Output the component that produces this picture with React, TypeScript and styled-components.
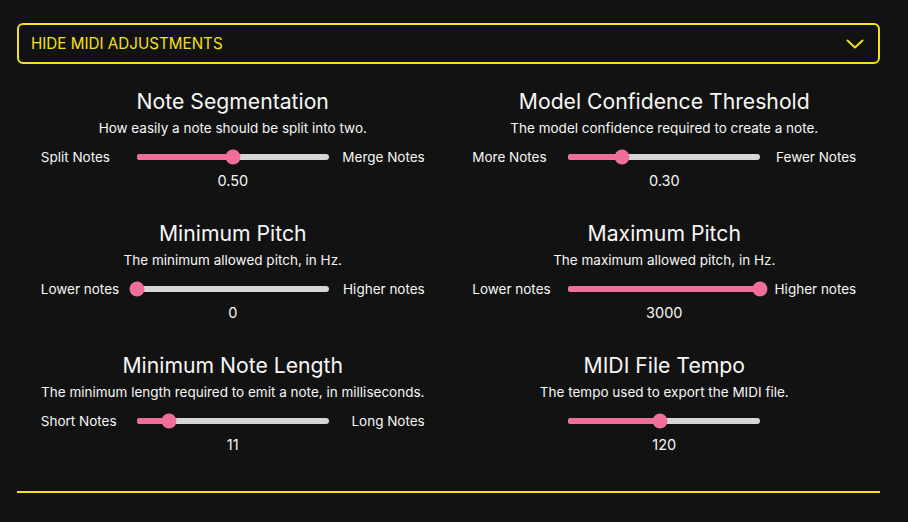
import styled, { createGlobalStyle } from 'styled-components';

/******************************************************************************/

const GlobalStyle = createGlobalStyle`
  body {
    margin: 0;
    background-color: #121212;
    font-family: Inter, 'Noto Sans', sans-serif;
    color: #f7f7f7;
  }
`;

const Page = styled.div`
  width: 863px;
  padding: 23px 0 0 17px;
  min-height: 522px;
  box-sizing: content-box;
`;

const Toggle = styled.div`
  height: 41px;
  box-sizing: border-box;
  border: 2px solid #f4e11a;
  border-radius: 6px;
  display: flex;
  align-items: center;
  justify-content: space-between;
  padding: 0 14px 0 12px;
  color: #f4e11a;
  font-size: 15.2px;
`;

const Grid = styled.div`
  display: grid;
  grid-template-columns: 1fr 1fr;
  row-gap: 31px;
  margin-top: 25px;
`;

const Section = styled.div`
  display: flex;
  flex-direction: column;
  align-items: center;
`;

const Title = styled.div`
  font-size: 21.2px;
  line-height: 24px;
`;

const Subtitle = styled.div`
  font-size: 13.5px;
  line-height: 18px;
  margin-top: 6px;
`;

const SliderRow = styled.div`
  display: grid;
  grid-template-columns: 96px 192px 96px;
  align-items: center;
  height: 20px;
  margin-top: 10px;
  font-size: 13.5px;
`;

const Label = styled.span<{ $right?: boolean }>`
  text-align: ${(p) => (p.$right ? 'right' : 'left')};
  white-space: nowrap;
`;

const Track = styled.div`
  position: relative;
  height: 6px;
  border-radius: 3px;
  background-color: #d6d6d6;
`;

const Fill = styled.div`
  height: 100%;
  border-radius: 3px;
  background-color: #f06e98;
`;

const Thumb = styled.div`
  position: absolute;
  top: 50%;
  width: 15px;
  height: 15px;
  border-radius: 50%;
  background-color: #f06e98;
  transform: translate(-50%, -50%);
`;

const Value = styled.div`
  font-size: 14.5px;
  line-height: 18px;
  margin-top: 5px;
`;

const Divider = styled.div`
  height: 2px;
  background-color: #f4e11a;
  margin-top: 37px;
`;

/******************************************************************************/

type Setting = {
  title: string;
  desc: string;
  left?: string;
  right?: string;
  value: string;
  pos: number;
};

const settings: Setting[] = [
  { title: 'Note Segmentation', desc: 'How easily a note should be split into two.', left: 'Split Notes', right: 'Merge Notes', value: '0.50', pos: 0.5 },
  { title: 'Model Confidence Threshold', desc: 'The model confidence required to create a note.', left: 'More Notes', right: 'Fewer Notes', value: '0.30', pos: 0.28 },
  { title: 'Minimum Pitch', desc: 'The minimum allowed pitch, in Hz.', left: 'Lower notes', right: 'Higher notes', value: '0', pos: 0 },
  { title: 'Maximum Pitch', desc: 'The maximum allowed pitch, in Hz.', left: 'Lower notes', right: 'Higher notes', value: '3000', pos: 1 },
  { title: 'Minimum Note Length', desc: 'The minimum length required to emit a note, in milliseconds.', left: 'Short Notes', right: 'Long Notes', value: '11', pos: 0.17 },
  { title: 'MIDI File Tempo', desc: 'The tempo used to export the MIDI file.', value: '120', pos: 0.48 },
];

const Chevron = () => (
  <svg width="18" height="10" viewBox="0 0 18 10" fill="none">
    <path d="M1.5 1.5 L9 8.5 L16.5 1.5" stroke="#f4e11a" strokeWidth="2" strokeLinecap="round" strokeLinejoin="round" />
  </svg>
);

const App = () => {
  return (
    <Page>
      <GlobalStyle />
      <Toggle>
        <span>HIDE MIDI ADJUSTMENTS</span>
        <Chevron />
      </Toggle>
      <Grid>
        {settings.map((s) => (
          <Section key={s.title}>
            <Title>{s.title}</Title>
            <Subtitle>{s.desc}</Subtitle>
            <SliderRow>
              <Label>{s.left}</Label>
              <Track>
                <Fill style={{ width: `${s.pos * 100}%` }} />
                <Thumb style={{ left: `${s.pos * 100}%` }} />
              </Track>
              <Label $right>{s.right}</Label>
            </SliderRow>
            <Value>{s.value}</Value>
          </Section>
        ))}
      </Grid>
      <Divider />
    </Page>
  );
};

export default App;
